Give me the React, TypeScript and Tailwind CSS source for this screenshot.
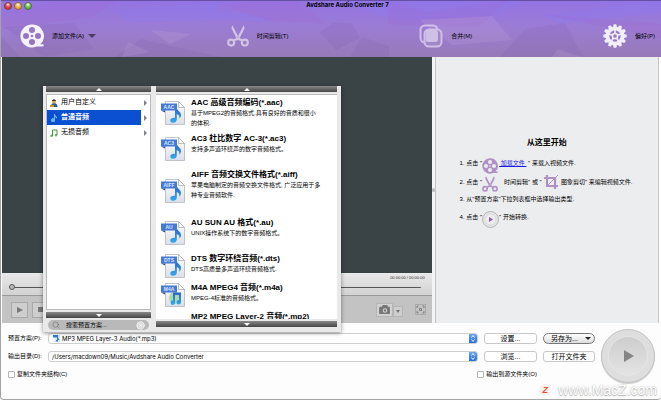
import type { ReactNode } from 'react'
import { CircleX, Search } from 'lucide-react'

const formats = [
  { tag: 'AAC', title: 'AAC 高级音频编码(*.aac)', desc: '基于MPEG2的音频格式,具有良好的音质和很小的体积.', height: 'h-8' },
  { tag: 'AC3', title: 'AC3 杜比数字 AC-3(*.ac3)', desc: '支持多声道环绕声的数字音频格式。', height: 'h-8' },
  { tag: 'AIFF', title: 'AIFF 音频交换文件格式(*.aiff)', desc: '苹果电脑制定的音频交换文件格式, 广泛应用于多种专业音频软件.', height: 'h-11' },
  { tag: 'AU', title: 'AU SUN AU 格式(*.au)', desc: 'UNIX操作系统下的数字音频格式。', height: 'h-8' },
  { tag: 'DTS', title: 'DTS 数字环绕音频(*.dts)', desc: 'DTS高质量多声道环绕音频格式.', height: 'h-[25px]' },
  { tag: 'M4A', title: 'M4A MPEG4 音频(*.m4a)', desc: 'MPEG-4标准的音频格式。', height: 'h-[25px]' },
]

function Reel({ className }: { className?: string }) {
  return (
    <svg viewBox="0 0 24 24" className={className} aria-hidden="true">
      <path
        fill="currentColor"
        fillRule="evenodd"
        d="M12 .5a11.5 11.5 0 1 0 4.6 22H23.5v-2.2h-3.2A11.5 11.5 0 0 0 12 .5zM12 3a3 3 0 1 1 0 6 3 3 0 0 1 0-6zm0 12a3 3 0 1 1 0 6 3 3 0 0 1 0-6zM6 9a3 3 0 1 1 0 6 3 3 0 0 1 0-6zm12 0a3 3 0 1 1 0 6 3 3 0 0 1 0-6zm-6 1.8a1.2 1.2 0 1 1 0 2.4 1.2 1.2 0 0 1 0-2.4z"
      />
    </svg>
  )
}

function Scissors({ className }: { className?: string }) {
  return (
    <svg viewBox="0 0 22 22" className={className} aria-hidden="true">
      <path fill="currentColor" d="M5.5.5 12.800 14.500l-2 1.400L5 4.500C4.300 3.200 4.500 1.500 5.500.5zM16.500.5 9.200 14.500l2 1.400L17 4.500c.7-1.300.5-3-.5-4z" />
      <g fill="none" stroke="currentColor" strokeWidth="2.200">
        <circle cx="4.200" cy="17.600" r="3" />
        <circle cx="17.800" cy="17.600" r="3" />
        <path d="m6.600 15.600 4.400-2.200 4.400 2.200" />
      </g>
    </svg>
  )
}

function Merge() {
  return (
    <svg viewBox="0 0 24 24" className="size-6" aria-hidden="true">
      <rect x="1.500" y="1.500" width="17" height="17" rx="4.500" fill="none" stroke="#d0bfe6" strokeWidth="2" />
      <rect x="5.500" y="5.500" width="17" height="17" rx="4.500" fill="#a287c8" stroke="#d0bfe6" strokeWidth="2" />
      <rect x="6.500" y="6" width="12.500" height="12" rx="3" fill="#d0bfe6" />
    </svg>
  )
}

function Gear() {
  const teeth = [0, 30, 60, 90, 120, 150, 180, 210, 240, 270, 300, 330]
  return (
    <svg viewBox="0 0 24 24" className="size-6 text-[#f3effa]" aria-hidden="true">
      {teeth.map((angle) => (
        <path key={angle} d="M9.800 4 10.700.3h2.600l.9 3.700z" fill="currentColor" transform={`rotate(${angle} 12 12)`} />
      ))}
      <circle cx="12" cy="12" r="7.500" fill="none" stroke="currentColor" strokeWidth="3.600" />
      <circle cx="12" cy="12" r="2.600" fill="none" stroke="currentColor" strokeWidth="1.500" />
      {[0, 72, 144, 216, 288].map((angle) => (
        <path key={angle} d="M12 9.500V5" stroke="currentColor" strokeWidth="1.600" transform={`rotate(${angle} 12 12)`} />
      ))}
    </svg>
  )
}

function Crop() {
  return (
    <svg viewBox="0 0 16 16" className="size-4 shrink-0 text-[#b091c6]" fill="none" stroke="currentColor" aria-hidden="true">
      <path d="M4 1v11h11M1 4h11v11" strokeWidth="2.200" />
      <path d="m5 11 10-10" strokeWidth="1" />
    </svg>
  )
}

function FileIcon({ tag }: { tag: string }) {
  return (
    <svg viewBox="0 0 26 26" className="size-[26px] shrink-0 self-center" aria-hidden="true">
      <defs>
        <linearGradient id={`paper-${tag}`} x2="0" y2="1">
          <stop stopColor="#fff" />
          <stop offset="1" stopColor="#dcdfe6" />
        </linearGradient>
        <linearGradient id={`note-${tag}`} x2="0" y2="1">
          <stop stopColor="#2b62c8" />
          <stop offset="1" stopColor="#35aaf0" />
        </linearGradient>
      </defs>
      <path d="M5.500 1.500h13l6 6v17h-19z" fill={`url(#paper-${tag})`} stroke="#b3b6bd" strokeWidth=".8" />
      <path d="M18.500 1.500v6h6z" fill="#fff" stroke="#a2a5ad" strokeWidth=".7" />
      {tag === 'M4A' && <circle cx="15" cy="16" r="6" fill="#a9d9a4" />}
      {tag === 'M4A' ? (
        <path d="M13 10.500h8V20a2.200 2.200 0 1 1-2-2v-5h-4v7.500a2.200 2.200 0 1 1-2-2z" fill={`url(#note-${tag})`} />
      ) : (
        <path d="M15 7.500h1.800c.2 3.500 4.200 4 4.200 7.500 0 1.800-.8 3-1.700 3.800.6-3-.8-4-2.500-4.800v5.500c0 2-1.600 3.300-3.500 3.300s-3-1-3-2.400c0-1.700 2-2.900 4.700-2.500z" fill={`url(#note-${tag})`} />
      )}
      <path d="M1 3.500h16v7H1z" fill="#4579d4" />
      <path d="m1 10.500 4 2v-2z" fill="#234b94" />
      <text x="9" y="9" textAnchor="middle" fontSize="5" fontWeight="700" fill="#d9e7ff">{tag}</text>
    </svg>
  )
}

function Backdrop() {
  return (
    <svg viewBox="0 0 661 57" preserveAspectRatio="none" className="absolute inset-0 size-full" aria-hidden="true">
      <defs>
        <linearGradient id="violet" x2="0" y2="1">
          <stop stopColor="#9474e4" />
          <stop offset=".5" stopColor="#9b7cd3" />
          <stop offset="1" stopColor="#967ab8" />
        </linearGradient>
      </defs>
      <path fill="url(#violet)" d="M0 0h661v57H0z" />
      <path fill="#8c7cf4" opacity=".3" d="M115 10 218 2v18l-90 2zM200 8l73 10-10 4-63-4zM330 0h195l-30 15-95 6zM542 15l119-15v12l-100 12z" />
      <path fill="#a762cf" opacity=".2" d="m60 0 60 0-30 17-90 13V14zM218 4l80-4 28 24-60-4zM388 0l40 12 80-12-30 28-90-4zM542 14l119 10v14z" />
      <path fill="#805cae" opacity=".18" d="m4 27 70-4 20 26-50 8zM115 57l26-18 79 18zM320 32l14-10 18 2 8 14-24 12zM350 57l12-20 27 9v11zM500 57l25-28 40-6 18 34zM0 35l20 22H0z" />
      <path fill="#cbb3de" opacity=".18" d="m128 42 22 10-28 5zM558 49l24 8h-30zM420 20l72-4 20 24-60 5zM150 30l42 4-22 10z" />
      <path fill="#6650a6" d="M0 0h661v1H0z" />
    </svg>
  )
}

function ToolButton({ icon, children }: { icon: ReactNode; children: ReactNode }) {
  return (
    <button type="button" className="flex items-center gap-2 text-[6px] leading-3">
      {icon}
      {children}
    </button>
  )
}

function ScrollBar({ down = false }: { down?: boolean }) {
  return (
    <button
      type="button"
      aria-label={down ? '向下滚动' : '向上滚动'}
      className="flex h-[6px] w-full shrink-0 items-center justify-center bg-gradient-to-b from-[#8a8a8a] to-[#454545]"
    >
      <svg viewBox="0 0 6 3" className={down ? 'h-[3px] w-[6px] rotate-180' : 'h-[3px] w-[6px]'} aria-hidden="true">
        <path d="m0 3 3-3 3 3z" fill="#fff" />
      </svg>
    </button>
  )
}

function Category({ icon, label, selected = false }: { icon: ReactNode; label: string; selected?: boolean }) {
  return (
    <li className="h-[15px]">
      <button type="button" className="flex size-full items-center text-[7px]">
        <span className={`flex h-full flex-1 items-center gap-[3px] pl-[3px] ${selected ? 'bg-[#0c50d2] font-bold text-white' : ''}`}>
          {icon}
          {label}
        </span>
        <span className="flex w-[9px] justify-center">
          <svg viewBox="0 0 3 6" className="h-[6px] w-[3px]" aria-hidden="true">
            <path d="m0 0 3 3-3 3z" fill="#7d838b" />
          </svg>
        </span>
      </button>
    </li>
  )
}

function PresetMenu() {
  return (
    <div className="absolute left-[42px] top-[86px] flex h-[246px] w-[298px] gap-[5px] bg-[#e9e9e9] pl-[3px] pr-1 shadow-[0_1px_4px_rgba(0,0,0,.45)]">
      <div className="flex w-[105px] flex-col">
        <ScrollBar />
        <ul className="mt-[2px] flex-1 border border-[#bbb] bg-white">
          <Category
            label="用户自定义"
            icon={
              <svg viewBox="0 0 8 8" className="size-2" aria-hidden="true">
                <path d="M1 8c0-3 1-4 3-4s3.500 1 3.500 4z" fill="#315a8c" />
                <circle cx="4" cy="2.500" r="2" fill="#d9a35b" />
                <path d="M2 2C2 0 6 0 6 2z" fill="#46321e" />
                <path d="M0 6h4v2H0z" fill="#c59a35" />
              </svg>
            }
          />
          <Category
            label="普通音频"
            selected
            icon={
              <svg viewBox="0 0 8 8" className="size-2" aria-hidden="true">
                <path d="M4 0h1c0 2 2.500 2 2 4.500L5 3v3a2 2 0 1 1-1-1.500z" fill="#65b4ff" />
              </svg>
            }
          />
          <Category
            label="无损音频"
            icon={
              <svg viewBox="0 0 8 8" className="size-2" fill="none" stroke="#3f963f" aria-hidden="true">
                <path d="M2.500 7V1h4.500v5" />
                <circle cx="1.500" cy="7" r=".8" />
                <circle cx="6" cy="6.200" r=".8" />
              </svg>
            }
          />
        </ul>
        <div className="mt-[2px] flex">
          <ScrollBar down />
        </div>
        <label className="mx-[2px] my-[2px] flex h-[10px] items-center gap-[6px] rounded-full bg-[#b9b9b9] px-1">
          <Search className="size-2 text-[#777]" />
          <input
            aria-label="搜索预置方案"
            placeholder="搜索预置方案..."
            className="w-0 flex-1 bg-transparent text-[6px] leading-[10px] outline-none placeholder:text-black"
          />
          <CircleX className="size-[9px] fill-[#ddd] text-[#f4f4f4]" />
        </label>
      </div>
      <div className="mb-[5px] flex w-0 flex-1 flex-col">
        <ScrollBar />
        <ul className="mb-[2px] mt-[2px] flex h-0 flex-1 flex-col gap-1 overflow-hidden border-t border-[#bbb] bg-white pl-1 pt-[2px]">
          {formats.map((format) => (
            <li key={format.tag} className={`flex shrink-0 gap-[5px] ${format.height}`}>
              <FileIcon tag={format.tag} />
              <div className="max-w-[130px]">
                <h3 className="whitespace-nowrap text-[8px] font-bold leading-[11px]">{format.title}</h3>
                <p className="text-[6px] leading-[10px]">{format.desc}</p>
              </div>
            </li>
          ))}
          <li className="shrink-0 pl-[31px]">
            <h3 className="whitespace-nowrap text-[8px] font-bold leading-[11px]">MP2 MPEG Layer-2 音频(*.mp2)</h3>
          </li>
        </ul>
        <ScrollBar down />
      </div>
    </div>
  )
}

function Player() {
  return (
    <section className="ml-px flex flex-1 flex-col">
      <div className="flex-1 bg-[#3a4446]" />
      <div className="flex h-[23px] flex-col items-end border-b border-[#999] bg-gradient-to-b from-[#e9e9e9] to-[#d2d2d2] px-[7px]">
        <span className="text-[4px] leading-[9px] text-[#333]">00:00:00 / 00:00:00</span>
        <input
          type="range"
          aria-label="播放进度"
          defaultValue={0}
          className="mr-1 h-[10px] w-[calc(100%-4px)] appearance-none bg-[linear-gradient(#555,#555)] bg-[length:100%_1px] bg-center bg-no-repeat [&::-webkit-slider-thumb]:size-[6px] [&::-webkit-slider-thumb]:appearance-none [&::-webkit-slider-thumb]:rounded-full [&::-webkit-slider-thumb]:border [&::-webkit-slider-thumb]:border-[#555] [&::-webkit-slider-thumb]:bg-[#bbb]"
        />
      </div>
      <div className="flex h-[27px] items-center gap-1 bg-[#c3c3c3] pl-[9px] pr-[6px] text-[#777]">
        <button type="button" aria-label="播放" className="flex h-4 w-[17px] items-center justify-center border border-[#a9a9a9] bg-[#cecece]">
          <svg viewBox="0 0 6 6" className="size-[6px]"><path d="m0 0 6 3-6 3z" fill="currentColor" /></svg>
        </button>
        <button type="button" aria-label="停止" className="flex h-4 w-[17px] items-center justify-center border border-[#a9a9a9] bg-[#cecece]">
          <span className="size-[5px] bg-[#777]" />
        </button>
        <div className="ml-auto flex items-end">
          <button type="button" aria-label="截图" className="flex h-[14px] w-[17px] items-center justify-center border border-[#b5b5b5] bg-[#d2d2d2]">
            <svg viewBox="0 0 12 10" className="h-[9px] w-[11px]">
              <path fill="currentColor" fillRule="evenodd" d="M1 2h2l1-2h5l1 2h2v8H0V3zm5.500 1.500a2.500 2.500 0 1 0 0 5 2.500 2.500 0 0 0 0-5zm0 1.200a1.300 1.300 0 1 1 0 2.600 1.300 1.300 0 0 1 0-2.600z" />
            </svg>
          </button>
          <button type="button" aria-label="截图选项" className="flex h-[11px] w-[10px] items-center justify-center border border-[#b5b5b5] bg-[#cecece]">
            <svg viewBox="0 0 4 3" className="h-[3px] w-1"><path d="M0 0h4L2 3z" fill="currentColor" /></svg>
          </button>
        </div>
        <button type="button" aria-label="全屏" className="ml-2 flex size-[11px] items-center justify-center border border-[#aaa]">
          <svg viewBox="0 0 9 9" className="size-[9px]" fill="none" stroke="currentColor" strokeWidth=".9">
            <path d="M3.500 3.500h2v2h-2zM1 3V1h1.500M6.500 1H8v2M1 6v2h1.500M6.500 8H8V6" />
          </svg>
        </button>
      </div>
    </section>
  )
}

function Guide() {
  return (
    <section className="mr-[2px] flex w-[34%] flex-col border-x border-[#c4c4c6] bg-[#ecedef] pt-[80px]">
      <h2 className="text-center text-[8px] font-bold leading-3">从这里开始</h2>
      <ol className="mt-[5px] pl-6 text-[6px] [&>li]:flex [&>li]:items-center [&>li]:whitespace-nowrap">
        <li className="h-[19px]">
          1. 点击 "
          <Reel className="mr-px mt-1 size-4 text-[#b091c6]" />
          <a href="#load" className="text-[#1a1ae0] underline">&nbsp;加载文件&nbsp;</a>
          &nbsp;" 来载入视频文件.
        </li>
        <li className="h-[18px]">
          2. 点击 "
          <Scissors className="mr-[6px] mt-1 size-4 text-[#b091c6]" />
          时间剪辑" 或 "&nbsp;
          <Crop />
          &nbsp;图象剪切" 来编辑视频文件.
        </li>
        <li className="h-[16px]">3. 从"预置方案"下拉列表框中选择输出类型.</li>
        <li className="h-[21px]">
          4. 点击 "
          <svg viewBox="0 0 17 17" className="mt-1 size-[17px]" aria-hidden="true">
            <circle cx="8.500" cy="8.500" r="8" fill="#e4e4e4" stroke="#aaa" strokeWidth=".8" />
            <circle cx="8.500" cy="8.500" r="5.500" fill="#eee" stroke="#d0d0d0" strokeWidth=".6" />
            <path d="m7 6 4 2.500-4 2.500z" fill="#8b5aac" />
          </svg>
          " 开始转换.
        </li>
      </ol>
    </section>
  )
}

function Dropdown({ id, value, icon }: { id: string; value: string; icon?: ReactNode }) {
  return (
    <div className="relative flex h-[11px] overflow-hidden rounded-[3px] border border-[#cfcfcf] bg-white">
      {icon}
      <select id={id} className={`w-full appearance-none font-['Inter',sans-serif] text-[6px] leading-[9px] outline-none ${icon ? 'pl-[13px]' : 'pl-[3px]'}`}>
        <option>{value}</option>
      </select>
      <span className="pointer-events-none absolute inset-y-0 right-0 flex w-2 items-center justify-center bg-gradient-to-b from-[#6ba5f5] to-[#256be2]">
        <svg viewBox="0 0 4 7" className="h-[7px] w-1" fill="none" stroke="#fff" strokeWidth=".9">
          <path d="m.5 2.500 1.500-2 1.500 2M.5 4.500l1.500 2 1.500-2" />
        </svg>
      </span>
    </div>
  )
}

const pushButton = 'h-[11px] rounded-[3px] border border-[#c8c8c8] bg-white text-center text-[7px] leading-[9px]'

function OutputForm() {
  return (
    <footer className="flex items-center gap-[6px] pb-4 pl-[7px] pr-[6px] pt-[6px]">
      <form className="grid flex-1 grid-cols-[34px_1fr_53px_52px] gap-x-[6px] gap-y-[7px] text-[6px] leading-[11px]">
        <label htmlFor="preset" className="whitespace-nowrap">预置方案(P):</label>
        <Dropdown
          id="preset"
          value="MP3 MPEG Layer-3 Audio(*.mp3)"
          icon={
            <svg viewBox="0 0 7 7" className="pointer-events-none absolute left-1 top-px size-[7px]" aria-hidden="true">
              <path d="M1.500 0H7v7H1.500z" fill="#dce8f7" />
              <path d="M0 0h5v2.500H0zM4 2.500h1L6.500 5H5v1.500H3V5h1z" fill="#317cd5" />
            </svg>
          }
        />
        <button type="button" className={pushButton}>设置...</button>
        <button type="button" className="flex h-[11px] items-center justify-center gap-[7px] rounded-full border border-[#777] bg-gradient-to-b from-white to-[#ddd] pl-1 text-[7px] leading-[9px]">
          另存为...
          <svg viewBox="0 0 6 3" className="h-[3px] w-[6px]"><path d="M0 0h6L3 3z" fill="#222" /></svg>
        </button>

        <label htmlFor="folder" className="whitespace-nowrap">输出目录(D):</label>
        <Dropdown id="folder" value="/Users/macdown09/Music/Avdshare Audio Converter" />
        <button type="button" className={pushButton}>浏览...</button>
        <button type="button" className={pushButton}>打开文件夹</button>

        <div className="col-span-3 flex justify-between">
          <label className="flex items-center gap-[2px]">
            <input type="checkbox" className="size-[7px] appearance-none rounded-[1px] border border-[#b5b5b5] bg-white checked:bg-[#256be2]" />
            复制文件夹结构(C)
          </label>
          <label className="flex items-center gap-[2px]">
            <input type="checkbox" className="size-[7px] appearance-none rounded-[1px] border border-[#b5b5b5] bg-white checked:bg-[#256be2]" />
            输出到源文件夹(O)
          </label>
        </div>
      </form>
      <button
        type="button"
        aria-label="开始转换"
        className="flex size-[54px] items-center justify-center rounded-full border border-[#c4c4c4] bg-[#dedede] shadow-[0_1px_1px_rgba(0,0,0,.2)]"
      >
        <span className="flex size-10 items-center justify-center rounded-full border border-[#e6e6e6] bg-gradient-to-b from-[#cdcdcd] to-[#e4e4e4]">
          <svg viewBox="0 0 10 12" className="ml-[2px] h-3 w-[10px]"><path d="m0 0 10 6-10 6z" fill="#858585" /></svg>
        </span>
      </button>
    </footer>
  )
}

export default function App() {
  return (
    <div className="relative flex min-h-screen flex-col overflow-hidden rounded-b-[4px] border-b border-l border-[#a5a5a5] bg-[#fdfdfd] font-['Liberation_Sans','Noto_Sans_CJK_SC',sans-serif] text-black">
      <header className="relative -ml-px flex h-[57px] flex-col">
        <Backdrop />
        <div className="relative flex h-[10px] items-start justify-center">
          <div className="absolute left-1 top-[2px] flex gap-[2px]">
            <button type="button" aria-label="关闭" className="size-2 rounded-full border border-[#8d2f3d] bg-[radial-gradient(circle_at_50%_25%,#fff,#e0443c_45%,#c8322e)]" />
            <button type="button" aria-label="最小化" className="size-2 rounded-full border border-[#936438] bg-[radial-gradient(circle_at_50%_25%,#fff,#efb545_45%,#e39a32)]" />
            <button type="button" aria-label="缩放" className="size-2 rounded-full border border-[#4c7340] bg-[radial-gradient(circle_at_50%_25%,#fff,#74c152_45%,#4ba238)]" />
          </div>
          <h1 className="ml-[34px] font-['Inter',sans-serif] text-[6px] font-bold leading-[10px]">Avdshare Audio Converter 7</h1>
        </div>
        <nav className="relative flex flex-1 items-center justify-between pb-[5px] pl-5 pr-[6px] pt-[9px]">
          <ToolButton icon={<Reel className="size-6 text-[#f5f1fa]" />}>
            添加文件(A)
            <svg viewBox="0 0 8 4" className="-ml-1 h-1 w-2"><path d="M0 0h8L4 4z" fill="#4d3c62" /></svg>
          </ToolButton>
          <ToolButton icon={<Scissors className="size-[22px] text-[#d3c2e4]" />}>时间剪辑(T)</ToolButton>
          <ToolButton icon={<Merge />}>合并(M)</ToolButton>
          <ToolButton icon={<Gear />}>偏好(P)</ToolButton>
        </nav>
      </header>
      <main className="flex flex-1">
        <Player />
        <div className="flex w-[3px] items-center bg-[#f4f4f4]">
          <span className="h-1 w-[3px] rounded-full bg-[#bbb]" />
        </div>
        <Guide />
      </main>
      <OutputForm />
      <PresetMenu />
      <div className="absolute bottom-0 right-1 flex items-center gap-[7px] text-[14px] leading-[18px] text-white [text-shadow:0_0_2px_#aaa,0_1px_1px_#bbb]">
        <span className="flex size-3 items-center justify-center rounded-full bg-[#f6f3f2] text-[9px] font-bold italic text-[#e8512b] [text-shadow:none]">Z</span>
        www.MacZ.com
      </div>
    </div>
  )
}
